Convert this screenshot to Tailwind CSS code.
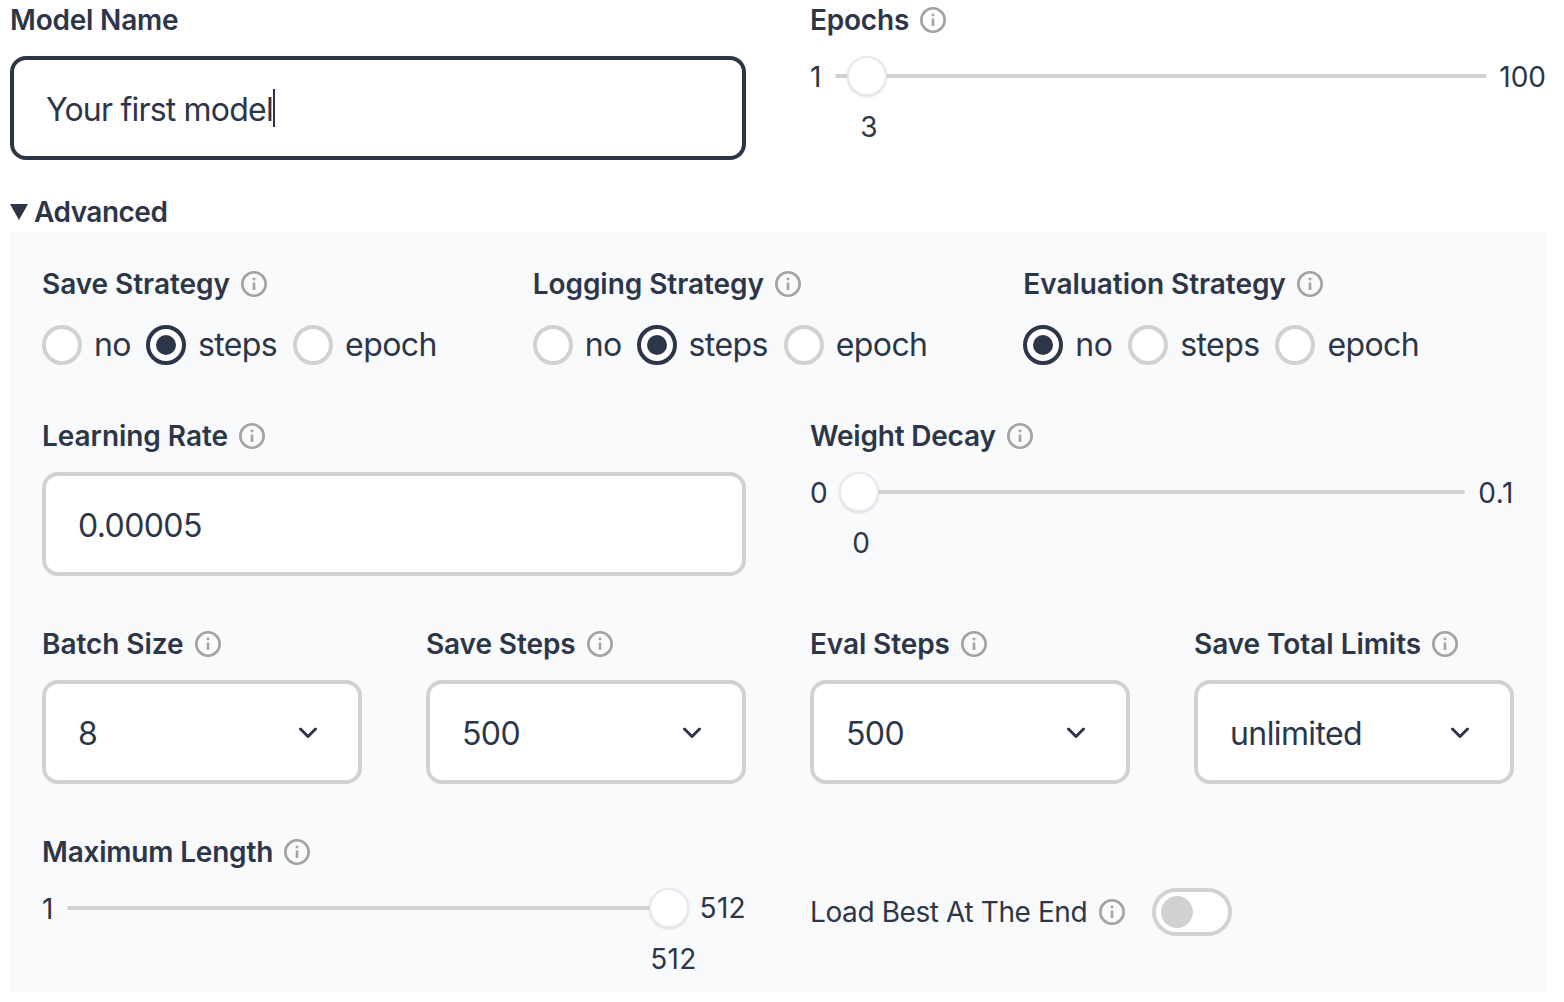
<!DOCTYPE html>
<html lang="en">
<head>
    <meta charset="UTF-8">
    <meta name="viewport" content="width=device-width, initial-scale=1.0">
    <title>Train Model</title>
    <script src="https://cdn.jsdelivr.net/npm/@tailwindcss/browser@4"></script>
</head>
<body class="bg-white text-[#2d3648] font-['Inter',sans-serif] text-[28px] leading-[40px] overflow-hidden">
<div class="w-[1564px] h-[1002px] pl-[10px] pr-[18px]">

    <!-- top row -->
    <div class="grid grid-cols-2 gap-x-[64px]">
        <div>
            <div class="font-semibold tracking-[-0.2px] mb-4">Model Name</div>
            <div class="h-[104px] border-4 border-[#2d3648] rounded-2xl bg-white flex items-center pl-[32px] text-[32px]">
                <span class="pt-[4px] tracking-[-0.8px]">Your first model</span><span class="w-[2px] h-[38px] bg-[#2d3648]"></span>
            </div>
        </div>
        <div>
            <div class="flex items-center gap-[11px] font-semibold tracking-[-0.2px]">
                <span>Epochs</span>
                <svg class="w-[26px] h-[26px] text-[#a3a3a3]" viewBox="0 0 26 26" fill="none" stroke="currentColor" stroke-width="2.6"><circle cx="13" cy="13" r="11.7"/><path d="M13 11.5v7.5M13 6.8v2.4"/></svg>
            </div>
            <div class="flex items-center h-[40px] mt-4">
                <span class="w-[25px] pt-[2px]">1</span>
                <div class="relative flex-1 h-[4px] bg-[#d1d1d1] rounded-full">
                    <div class="absolute left-[12px] top-[-18px] w-[40px] h-[40px] rounded-full bg-white border-2 border-[#e8e8ee] shadow-sm"></div>
                    <div class="absolute left-[22px] top-[33px] w-[24px] text-center">3</div>
                </div>
                <span class="ml-[12px] pt-[2px]">100</span>
            </div>
        </div>
    </div>

    <div class="mt-[32px] flex items-center gap-[6px] font-semibold tracking-[-0.5px]">
        <svg class="w-[18px] h-[16px] text-[#2d3648]" viewBox="0 0 18 16" fill="currentColor"><path d="M0 0h18L9 16z"/></svg>
        <span>Advanced</span>
    </div>

    <!-- advanced panel -->
    <div class="h-[760px] bg-[#f9fafc] pt-[32px] px-[32px]">

        <div class="grid grid-cols-3">
            <div>
                <div class="flex items-center gap-[11px] font-semibold tracking-[-0.05px]">
                    <span>Save Strategy</span>
                    <svg class="w-[26px] h-[26px] text-[#a3a3a3]" viewBox="0 0 26 26" fill="none" stroke="currentColor" stroke-width="2.6"><circle cx="13" cy="13" r="11.7"/><path d="M13 11.5v7.5M13 6.8v2.4"/></svg>
                </div>
                <div class="flex items-center mt-[21px] text-[32px] tracking-[-0.6px]">
                    <span class="w-[40px] h-[40px] rounded-full border-4 border-[#d1d1d1] bg-white"></span>
                    <span class="ml-[12px] mr-[15px]">no</span>
                    <span class="w-[40px] h-[40px] rounded-full border-4 border-[#2d3648] bg-white flex items-center justify-center"><span class="w-[20px] h-[20px] rounded-full bg-[#2d3648]"></span></span>
                    <span class="ml-[12px] mr-[16px]">steps</span>
                    <span class="w-[40px] h-[40px] rounded-full border-4 border-[#d1d1d1] bg-white"></span>
                    <span class="ml-[12px]">epoch</span>
                </div>
            </div>
            <div>
                <div class="flex items-center gap-[11px] font-semibold tracking-[-0.05px]">
                    <span>Logging Strategy</span>
                    <svg class="w-[26px] h-[26px] text-[#a3a3a3]" viewBox="0 0 26 26" fill="none" stroke="currentColor" stroke-width="2.6"><circle cx="13" cy="13" r="11.7"/><path d="M13 11.5v7.5M13 6.8v2.4"/></svg>
                </div>
                <div class="flex items-center mt-[21px] text-[32px] tracking-[-0.6px]">
                    <span class="w-[40px] h-[40px] rounded-full border-4 border-[#d1d1d1] bg-white"></span>
                    <span class="ml-[12px] mr-[15px]">no</span>
                    <span class="w-[40px] h-[40px] rounded-full border-4 border-[#2d3648] bg-white flex items-center justify-center"><span class="w-[20px] h-[20px] rounded-full bg-[#2d3648]"></span></span>
                    <span class="ml-[12px] mr-[16px]">steps</span>
                    <span class="w-[40px] h-[40px] rounded-full border-4 border-[#d1d1d1] bg-white"></span>
                    <span class="ml-[12px]">epoch</span>
                </div>
            </div>
            <div>
                <div class="flex items-center gap-[11px] font-semibold tracking-[-0.05px]">
                    <span>Evaluation Strategy</span>
                    <svg class="w-[26px] h-[26px] text-[#a3a3a3]" viewBox="0 0 26 26" fill="none" stroke="currentColor" stroke-width="2.6"><circle cx="13" cy="13" r="11.7"/><path d="M13 11.5v7.5M13 6.8v2.4"/></svg>
                </div>
                <div class="flex items-center mt-[21px] text-[32px] tracking-[-0.6px]">
                    <span class="w-[40px] h-[40px] rounded-full border-4 border-[#2d3648] bg-white flex items-center justify-center"><span class="w-[20px] h-[20px] rounded-full bg-[#2d3648]"></span></span>
                    <span class="ml-[12px] mr-[16px]">no</span>
                    <span class="w-[40px] h-[40px] rounded-full border-4 border-[#d1d1d1] bg-white"></span>
                    <span class="ml-[12px] mr-[16px]">steps</span>
                    <span class="w-[40px] h-[40px] rounded-full border-4 border-[#d1d1d1] bg-white"></span>
                    <span class="ml-[12px]">epoch</span>
                </div>
            </div>
        </div>

        <div class="grid grid-cols-2 gap-x-[64px] mt-[51px]">
            <div>
                <div class="flex items-center gap-[11px] font-semibold tracking-[-0.05px]">
                    <span>Learning Rate</span>
                    <svg class="w-[26px] h-[26px] text-[#a3a3a3]" viewBox="0 0 26 26" fill="none" stroke="currentColor" stroke-width="2.6"><circle cx="13" cy="13" r="11.7"/><path d="M13 11.5v7.5M13 6.8v2.4"/></svg>
                </div>
                <div class="mt-4 h-[104px] border-4 border-[#d1d1d1] rounded-2xl bg-white flex items-center pl-[32px] text-[32px] tracking-[-0.6px]"><span class="pt-[4px]">0.00005</span></div>
            </div>
            <div>
                <div class="flex items-center gap-[11px] font-semibold tracking-[-0.2px]">
                    <span>Weight Decay</span>
                    <svg class="w-[26px] h-[26px] text-[#a3a3a3]" viewBox="0 0 26 26" fill="none" stroke="currentColor" stroke-width="2.6"><circle cx="13" cy="13" r="11.7"/><path d="M13 11.5v7.5M13 6.8v2.4"/></svg>
                </div>
                <div class="flex items-center h-[40px] mt-4">
                    <span class="w-[29px] pt-[2px]">0</span>
                    <div class="relative flex-1 h-[4px] bg-[#d1d1d1] rounded-full">
                        <div class="absolute left-0 top-[-18px] w-[40px] h-[40px] rounded-full bg-white border-2 border-[#e8e8ee] shadow-sm"></div>
                        <div class="absolute left-[10px] top-[33px] w-[24px] text-center">0</div>
                    </div>
                    <span class="ml-[13px] pt-[2px] tracking-[0.6px]">0.1</span>
                </div>
            </div>
        </div>

        <div class="grid grid-cols-4 gap-x-[64px] mt-[48px]">
            <div>
                <div class="flex items-center gap-[11px] font-semibold tracking-[-0.05px]">
                    <span>Batch Size</span>
                    <svg class="w-[26px] h-[26px] text-[#a3a3a3]" viewBox="0 0 26 26" fill="none" stroke="currentColor" stroke-width="2.6"><circle cx="13" cy="13" r="11.7"/><path d="M13 11.5v7.5M13 6.8v2.4"/></svg>
                </div>
                <div class="mt-4 h-[104px] border-4 border-[#d1d1d1] rounded-2xl bg-white flex items-center justify-between pl-[32px] pr-[41px] text-[32px] tracking-[-0.6px]">
                    <span class="pt-[4px]">8</span>
                    <svg class="w-[18px] h-[12px] mt-[2px] text-[#2d3648]" viewBox="0 0 18 12" fill="none" stroke="currentColor" stroke-width="3" stroke-linecap="round" stroke-linejoin="round"><path d="M1.5 2 9 9.5 16.5 2"/></svg>
                </div>
            </div>
            <div>
                <div class="flex items-center gap-[11px] font-semibold tracking-[-0.1px]">
                    <span>Save Steps</span>
                    <svg class="w-[26px] h-[26px] text-[#a3a3a3]" viewBox="0 0 26 26" fill="none" stroke="currentColor" stroke-width="2.6"><circle cx="13" cy="13" r="11.7"/><path d="M13 11.5v7.5M13 6.8v2.4"/></svg>
                </div>
                <div class="mt-4 h-[104px] border-4 border-[#d1d1d1] rounded-2xl bg-white flex items-center justify-between pl-[32px] pr-[41px] text-[32px] tracking-[-0.6px]">
                    <span class="pt-[4px]">500</span>
                    <svg class="w-[18px] h-[12px] mt-[2px] text-[#2d3648]" viewBox="0 0 18 12" fill="none" stroke="currentColor" stroke-width="3" stroke-linecap="round" stroke-linejoin="round"><path d="M1.5 2 9 9.5 16.5 2"/></svg>
                </div>
            </div>
            <div>
                <div class="flex items-center gap-[11px] font-semibold tracking-[-0.1px]">
                    <span>Eval Steps</span>
                    <svg class="w-[26px] h-[26px] text-[#a3a3a3]" viewBox="0 0 26 26" fill="none" stroke="currentColor" stroke-width="2.6"><circle cx="13" cy="13" r="11.7"/><path d="M13 11.5v7.5M13 6.8v2.4"/></svg>
                </div>
                <div class="mt-4 h-[104px] border-4 border-[#d1d1d1] rounded-2xl bg-white flex items-center justify-between pl-[32px] pr-[41px] text-[32px] tracking-[-0.6px]">
                    <span class="pt-[4px]">500</span>
                    <svg class="w-[18px] h-[12px] mt-[2px] text-[#2d3648]" viewBox="0 0 18 12" fill="none" stroke="currentColor" stroke-width="3" stroke-linecap="round" stroke-linejoin="round"><path d="M1.5 2 9 9.5 16.5 2"/></svg>
                </div>
            </div>
            <div>
                <div class="flex items-center gap-[11px] font-semibold tracking-[-0.05px]">
                    <span>Save Total Limits</span>
                    <svg class="w-[26px] h-[26px] text-[#a3a3a3]" viewBox="0 0 26 26" fill="none" stroke="currentColor" stroke-width="2.6"><circle cx="13" cy="13" r="11.7"/><path d="M13 11.5v7.5M13 6.8v2.4"/></svg>
                </div>
                <div class="mt-4 h-[104px] border-4 border-[#d1d1d1] rounded-2xl bg-white flex items-center justify-between pl-[32px] pr-[41px] text-[32px] tracking-[-0.6px]">
                    <span class="pt-[4px]">unlimited</span>
                    <svg class="w-[18px] h-[12px] mt-[2px] text-[#2d3648]" viewBox="0 0 18 12" fill="none" stroke="currentColor" stroke-width="3" stroke-linecap="round" stroke-linejoin="round"><path d="M1.5 2 9 9.5 16.5 2"/></svg>
                </div>
            </div>
        </div>

        <div class="grid grid-cols-2 gap-x-[64px] mt-[48px]">
            <div>
                <div class="flex items-center gap-[11px] font-semibold tracking-[-0.2px]">
                    <span>Maximum Length</span>
                    <svg class="w-[26px] h-[26px] text-[#a3a3a3]" viewBox="0 0 26 26" fill="none" stroke="currentColor" stroke-width="2.6"><circle cx="13" cy="13" r="11.7"/><path d="M13 11.5v7.5M13 6.8v2.4"/></svg>
                </div>
                <div class="flex items-center h-[40px] mt-4">
                    <span class="w-[25px] pt-[2px]">1</span>
                    <div class="relative flex-1 h-[4px] bg-[#d1d1d1] rounded-full">
                        <div class="absolute right-[-1px] top-[-18px] w-[40px] h-[40px] rounded-full bg-white border-2 border-[#e8e8ee] shadow-sm"></div>
                        <div class="absolute right-[-9px] top-[33px] tracking-[0.3px]">512</div>
                    </div>
                    <span class="ml-[12px] tracking-[0.3px]">512</span>
                </div>
            </div>
            <div class="flex items-center gap-[12px] pt-[56px] self-start">
                <span class="tracking-[-0.4px]">Load Best At The End</span>
                <svg class="w-[26px] h-[26px] text-[#a3a3a3]" viewBox="0 0 26 26" fill="none" stroke="currentColor" stroke-width="2.6"><circle cx="13" cy="13" r="11.7"/><path d="M13 11.5v7.5M13 6.8v2.4"/></svg>
                <div class="ml-[15px] w-[80px] h-[48px] rounded-full border-4 border-[#d1d1d1] bg-white flex items-center pl-[5px]">
                    <span class="w-[32px] h-[32px] rounded-full bg-[#d1d1d1]"></span>
                </div>
            </div>
        </div>
    </div>
</div>
</body>
</html>
